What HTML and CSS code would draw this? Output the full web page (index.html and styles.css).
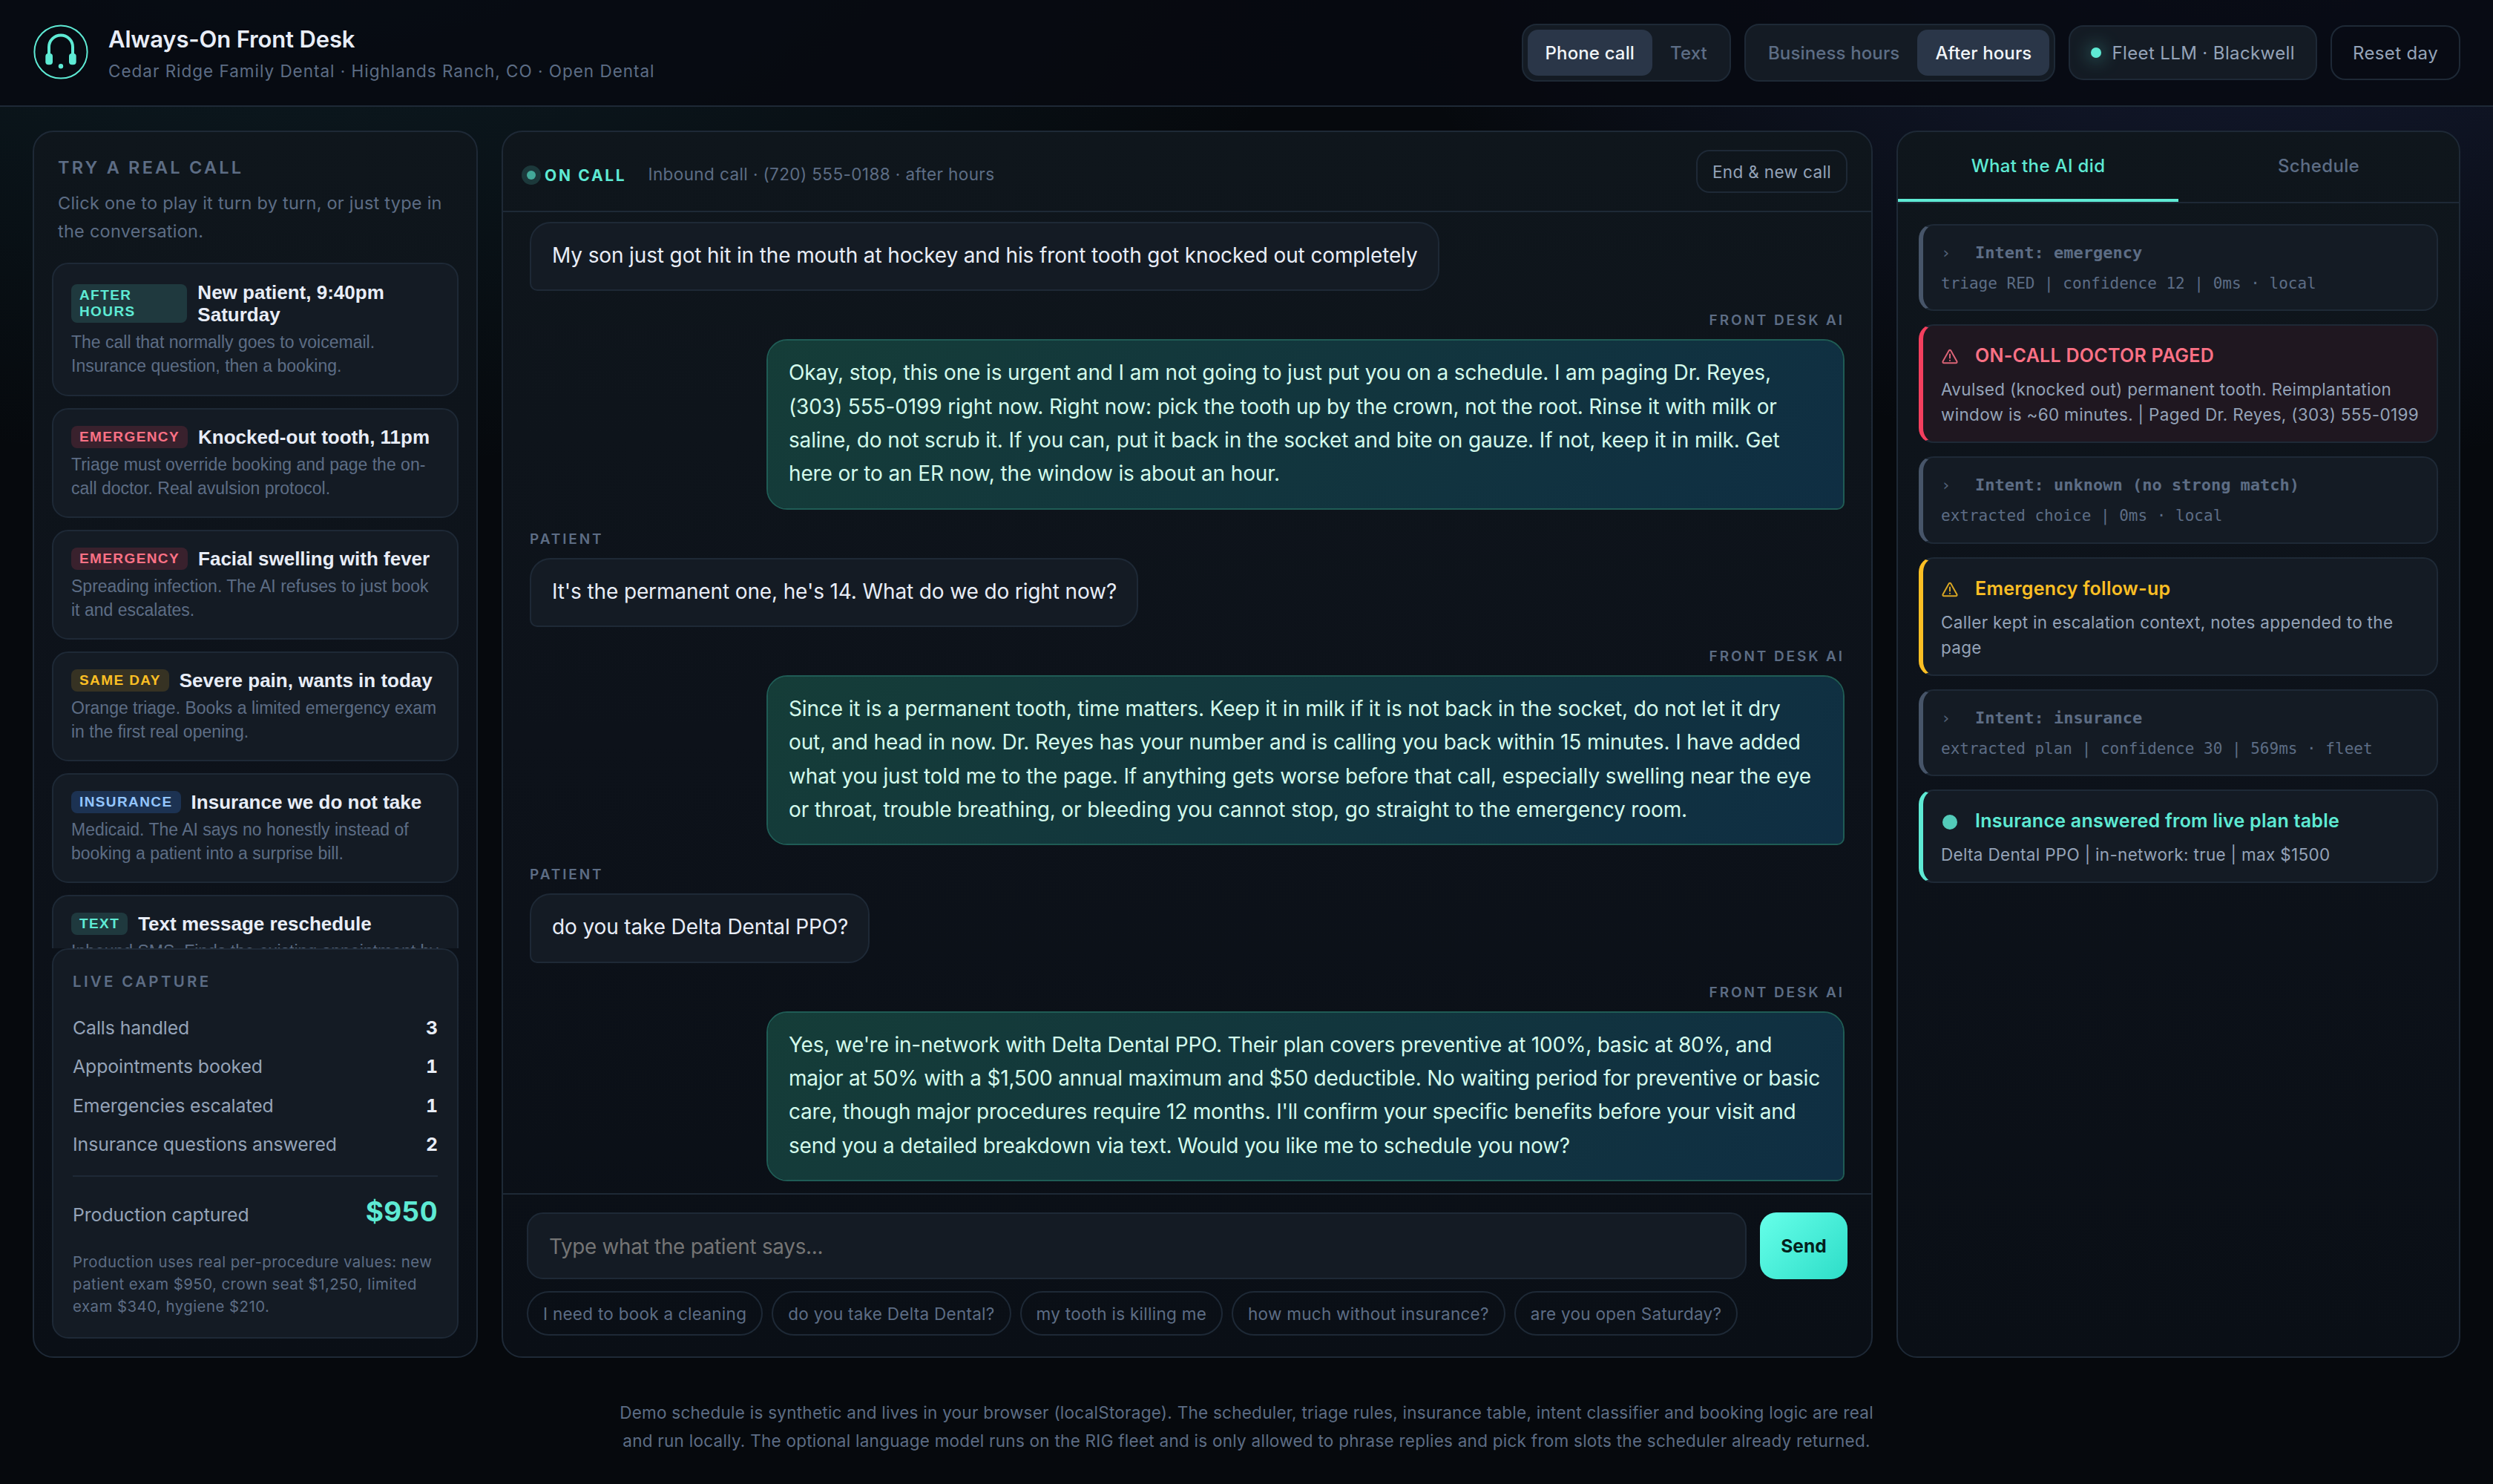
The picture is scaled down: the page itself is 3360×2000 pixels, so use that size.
FILE: index.html
```html
<!DOCTYPE html>
<html lang="en">
<head>
<meta charset="utf-8">
<meta name="viewport" content="width=device-width, initial-scale=1.0">
<title>Always-On Front Desk</title>
<link rel="stylesheet" href="styles.css">
</head>
<body>
<header class="topbar">
  <div class="brand">
    <svg class="logo" viewBox="0 0 76 76" fill="none">
      <circle cx="38" cy="38" r="35.6" stroke="#5eead4" stroke-width="2"/>
      <path d="M22 42V31.5a16 16 0 0 1 32 0V42" stroke="#5eead4" stroke-width="4"/>
      <rect x="17.3" y="40" width="9.7" height="15.3" rx="4" fill="#5eead4"/>
      <rect x="49" y="40" width="9.7" height="15.3" rx="4" fill="#5eead4"/>
      <circle cx="38" cy="57.3" r="3.2" fill="#5eead4"/>
    </svg>
    <div class="brand-text">
      <h1>Always-On Front Desk</h1>
      <p>Cedar Ridge Family Dental · Highlands Ranch, CO · Open Dental</p>
    </div>
  </div>
  <div class="controls">
    <div class="seg">
      <button class="on">Phone call</button>
      <button>Text</button>
    </div>
    <div class="seg">
      <button>Business hours</button>
      <button class="on">After hours</button>
    </div>
    <div class="pill"><span class="led"></span>Fleet LLM · Blackwell</div>
    <button class="ghost">Reset day</button>
  </div>
</header>

<main class="grid">
  <aside class="panel left">
    <div class="intro">
      <h2>TRY A REAL CALL</h2>
      <p>Click one to play it turn by turn, or just type in the conversation.</p>
    </div>
    <div class="scenarios">
      <button class="scenario">
        <span class="head"><span class="tag teal">AFTER HOURS</span><b>New patient, 9:40pm Saturday</b></span>
        <span class="desc">The call that normally goes to voicemail. Insurance question, then a booking.</span>
      </button>
      <button class="scenario">
        <span class="head"><span class="tag red">EMERGENCY</span><b>Knocked-out tooth, 11pm</b></span>
        <span class="desc">Triage must override booking and page the on-call doctor. Real avulsion protocol.</span>
      </button>
      <button class="scenario">
        <span class="head"><span class="tag red">EMERGENCY</span><b>Facial swelling with fever</b></span>
        <span class="desc">Spreading infection. The AI refuses to just book it and escalates.</span>
      </button>
      <button class="scenario">
        <span class="head"><span class="tag amber">SAME DAY</span><b>Severe pain, wants in today</b></span>
        <span class="desc">Orange triage. Books a limited emergency exam in the first real opening.</span>
      </button>
      <button class="scenario">
        <span class="head"><span class="tag blue">INSURANCE</span><b>Insurance we do not take</b></span>
        <span class="desc">Medicaid. The AI says no honestly instead of booking a patient into a surprise bill.</span>
      </button>
      <button class="scenario">
        <span class="head"><span class="tag teal">TEXT</span><b>Text message reschedule</b></span>
        <span class="desc">Inbound SMS. Finds the existing appointment by phone and moves it.</span>
      </button>
    </div>
    <div class="capture">
      <h3>LIVE CAPTURE</h3>
      <div class="stat"><span>Calls handled</span><b>3</b></div>
      <div class="stat"><span>Appointments booked</span><b>1</b></div>
      <div class="stat"><span>Emergencies escalated</span><b>1</b></div>
      <div class="stat"><span>Insurance questions answered</span><b>2</b></div>
      <div class="stat total"><span>Production captured</span><b>$950</b></div>
      <p>Production uses real per-procedure values: new patient exam $950, crown seat $1,250, limited exam $340, hygiene $210.</p>
    </div>
  </aside>

  <section class="panel center">
    <div class="call-bar">
      <span class="state"><i></i>ON CALL</span>
      <span class="meta">Inbound call · (720) 555-0188 · after hours</span>
      <button class="end">End &amp; new call</button>
    </div>
    <div class="messages">
      <div class="msg">
        <div class="bubble">My son just got hit in the mouth at hockey and his front tooth got knocked out completely</div>
      </div>
      <div class="msg ai">
        <span class="who">FRONT DESK AI</span>
        <div class="bubble">Okay, stop, this one is urgent and I am not going to just put you on a schedule. I am paging Dr. Reyes, (303) 555-0199 right now. Right now: pick the tooth up by the crown, not the root. Rinse it with milk or saline, do not scrub it. If you can, put it back in the socket and bite on gauze. If not, keep it in milk. Get here or to an ER now, the window is about an hour.</div>
      </div>
      <div class="msg">
        <span class="who">PATIENT</span>
        <div class="bubble">It's the permanent one, he's 14. What do we do right now?</div>
      </div>
      <div class="msg ai">
        <span class="who">FRONT DESK AI</span>
        <div class="bubble">Since it is a permanent tooth, time matters. Keep it in milk if it is not back in the socket, do not let it dry out, and head in now. Dr. Reyes has your number and is calling you back within 15 minutes. I have added what you just told me to the page. If anything gets worse before that call, especially swelling near the eye or throat, trouble breathing, or bleeding you cannot stop, go straight to the emergency room.</div>
      </div>
      <div class="msg">
        <span class="who">PATIENT</span>
        <div class="bubble">do you take Delta Dental PPO?</div>
      </div>
      <div class="msg ai">
        <span class="who">FRONT DESK AI</span>
        <div class="bubble">Yes, we're in-network with Delta Dental PPO. Their plan covers preventive at 100%, basic at 80%, and major at 50% with a $1,500 annual maximum and $50 deductible. No waiting period for preventive or basic care, though major procedures require 12 months. I'll confirm your specific benefits before your visit and send you a detailed breakdown via text. Would you like me to schedule you now?</div>
      </div>
    </div>
    <div class="composer">
      <div class="entry-row">
        <input type="text" placeholder="Type what the patient says...">
        <button class="send">Send</button>
      </div>
      <div class="chips">
        <button>I need to book a cleaning</button>
        <button>do you take Delta Dental?</button>
        <button>my tooth is killing me</button>
        <button>how much without insurance?</button>
        <button>are you open Saturday?</button>
      </div>
    </div>
  </section>

  <aside class="panel right">
    <div class="tabs">
      <button class="on">What the AI did</button>
      <button>Schedule</button>
    </div>
    <div class="log">
      <div class="event trace">
        <div class="event-head"><span class="icon">›</span>Intent: emergency</div>
        <div class="event-body">triage RED | confidence 12 | 0ms · local</div>
      </div>
      <div class="event danger">
        <div class="event-head"><span class="icon"><svg viewBox="0 0 24 22"><path d="M10.7 2.6 2.6 17c-.6 1.1.1 2.3 1.3 2.3h16.2c1.2 0 1.9-1.2 1.3-2.3L13.3 2.6c-.6-1-2-1-2.6 0zM12 7.6v5M12 15.7v.2"/></svg></span>ON-CALL DOCTOR PAGED</div>
        <div class="event-body">Avulsed (knocked out) permanent tooth. Reimplantation window is ~60 minutes. | Paged Dr. Reyes, (303) 555-0199</div>
      </div>
      <div class="event trace">
        <div class="event-head"><span class="icon">›</span>Intent: unknown (no strong match)</div>
        <div class="event-body">extracted choice | 0ms · local</div>
      </div>
      <div class="event warn">
        <div class="event-head"><span class="icon"><svg viewBox="0 0 24 22"><path d="M10.7 2.6 2.6 17c-.6 1.1.1 2.3 1.3 2.3h16.2c1.2 0 1.9-1.2 1.3-2.3L13.3 2.6c-.6-1-2-1-2.6 0zM12 7.6v5M12 15.7v.2"/></svg></span>Emergency follow-up</div>
        <div class="event-body">Caller kept in escalation context, notes appended to the page</div>
      </div>
      <div class="event trace">
        <div class="event-head"><span class="icon">›</span>Intent: insurance</div>
        <div class="event-body">extracted plan | confidence 30 | 569ms · fleet</div>
      </div>
      <div class="event ok">
        <div class="event-head"><span class="icon"><i class="dot"></i></span>Insurance answered from live plan table</div>
        <div class="event-body">Delta Dental PPO | in-network: true | max $1500</div>
      </div>
    </div>
  </aside>
</main>

<footer>
  <p>Demo schedule is synthetic and lives in your browser (localStorage). The scheduler, triage rules, insurance table, intent classifier and booking logic are real and run locally. The optional language model runs on the RIG fleet and is only allowed to phrase replies and pick from slots the scheduler already returned.</p>
</footer>
</body>
</html>
```
FILE: styles.css
```css
:root {
  --bg: #06090d;
  --card: #141b24;
  --line: #1e2936;
  --text: #e8edf7;
  --soft: #94a3b8;
  --muted: #5d6d85;
  --accent: #5eead4;
  --red: #fb7185;
  --amber: #fbbf24;
}
* { box-sizing: border-box; }
body {
  margin: 0;
  height: 2000px;
  overflow: hidden;
  color: var(--text);
  font-family: Inter, "Liberation Sans", sans-serif;
  background:
    radial-gradient(2400px 1400px at 12% -10%, rgba(70, 180, 210, .13), transparent 60%),
    radial-gradient(2000px 1400px at 90% -10%, rgba(90, 112, 228, .2), transparent 60%),
    var(--bg);
}
h1, h2, h3, p { margin: 0; }
button {
  margin: 0;
  border: 0;
  background: none;
  color: inherit;
  font-family: inherit;
}

/* top bar */
.topbar {
  display: flex;
  justify-content: space-between;
  align-items: flex-start;
  height: 144px;
  padding: 32px 44px 0;
  border-bottom: 2px solid var(--line);
  background: rgba(7, 10, 17, .84);
}
.brand { display: flex; gap: 26px; }
.logo { width: 76px; height: 76px; }
.brand-text h1 {
  font-size: 31px;
  line-height: 42px;
  font-weight: 620;
  letter-spacing: -.15px;
}
.brand-text p {
  margin-top: 5px;
  font-size: 22.5px;
  line-height: 34px;
  letter-spacing: .98px;
  color: var(--muted);
}
.controls { display: flex; align-items: center; gap: 18px; }
.seg {
  display: flex;
  padding: 6px;
  border: 2px solid var(--line);
  border-radius: 20px;
  background: var(--card);
}
.seg button {
  height: 62px;
  padding: 0 24px;
  border-radius: 14px;
  font-size: 24px;
  font-weight: 460;
  letter-spacing: .14px;
  color: var(--muted);
}
.seg .on { background: #2a3648; color: #f1f5f9; }
.pill, .ghost {
  display: flex;
  align-items: center;
  height: 74px;
  padding: 0 28px;
  border: 2px solid var(--line);
  border-radius: 20px;
  font-size: 24px;
  font-weight: 400;
  letter-spacing: .38px;
  color: var(--soft);
}
.pill { gap: 14px; background: var(--card); }
.led {
  width: 14px;
  height: 14px;
  border-radius: 50%;
  background: var(--accent);
  box-shadow: 0 0 24px rgba(94, 234, 212, .75);
}

/* layout */
.grid {
  display: grid;
  grid-template-columns: 600px 1fr 760px;
  gap: 32px;
  height: 1686px;
  padding: 32px 44px 0;
}
.panel {
  display: flex;
  flex-direction: column;
  min-width: 0;
  min-height: 0;
  overflow: hidden;
  border: 2px solid var(--line);
  border-radius: 28px;
  background: linear-gradient(180deg, #0f161c, #0d121a 50%, #0a0f16);
}

/* scenarios */
.left { padding: 24px; }
.intro { height: 152px; flex: none; padding: 6px 8px 0; }
.intro h2 {
  font-size: 23.5px;
  line-height: 36px;
  font-weight: 600;
  letter-spacing: 3.2px;
  color: var(--muted);
}
.intro p {
  margin-top: 11px;
  font-size: 23.5px;
  line-height: 38.2px;
  letter-spacing: .25px;
  color: var(--muted);
}
.scenarios {
  flex: 1;
  min-height: 0;
  overflow: hidden;
  display: flex;
  flex-direction: column;
  gap: 16px;
}
.scenario {
  display: block;
  flex: none;
  width: 100%;
  padding: 22px 24px;
  border: 2px solid var(--line);
  border-radius: 22px;
  background: var(--card);
  text-align: left;
  font-family: "Liberation Sans", Arial, sans-serif;
}
.scenario:first-child { height: 180px; }
.head { display: flex; align-items: center; gap: 14px; }
.head b { font-size: 26px; line-height: 30px; }
.tag {
  padding: 4px 11px;
  border-radius: 8px;
  font-size: 19px;
  line-height: 22px;
  font-weight: 700;
  letter-spacing: 1.4px;
}
.teal { color: var(--accent); background: rgba(94, 234, 212, .15); }
.red { color: var(--red); background: rgba(244, 63, 94, .17); }
.amber { color: var(--amber); background: rgba(251, 191, 36, .15); }
.blue { color: #93c5fd; background: rgba(59, 130, 246, .22); }
.desc {
  display: block;
  margin-top: 6px;
  font-size: 23px;
  line-height: 32px;
  color: var(--muted);
}

/* live capture */
.capture {
  flex: none;
  height: 526px;
  padding: 26px;
  border: 2px solid var(--line);
  border-radius: 22px;
  background: var(--card);
}
.capture h3 {
  margin-bottom: 20px;
  font-size: 20.5px;
  line-height: 33px;
  font-weight: 600;
  letter-spacing: 3.3px;
  color: var(--muted);
}
.stat {
  display: flex;
  justify-content: space-between;
  align-items: baseline;
  font-size: 24.8px;
  line-height: 52.3px;
  letter-spacing: -.08px;
  color: var(--soft);
}
.stat b {
  font-weight: 700;
  color: var(--text);
  font-variant-numeric: tabular-nums;
}
.total {
  margin-top: 16px;
  padding-top: 19px;
  border-top: 2px solid var(--line);
  line-height: 56px;
}
.total b { font-size: 37px; font-weight: 650; letter-spacing: .3px; color: var(--accent); }
.capture p {
  margin-top: 21px;
  font-size: 20.4px;
  line-height: 30px;
  letter-spacing: .46px;
  color: var(--muted);
}

/* conversation */
.call-bar {
  display: flex;
  align-items: center;
  flex: none;
  height: 108px;
  padding: 0 32px;
  border-bottom: 2px solid var(--line);
}
.state {
  display: flex;
  align-items: center;
  gap: 12px;
  padding-top: 10px;
  font-size: 21px;
  font-weight: 650;
  letter-spacing: 2.7px;
  color: var(--accent);
}
.state i {
  width: 12px;
  height: 12px;
  border-radius: 50%;
  background: #43a999;
  box-shadow: 0 0 0 7px rgba(94, 234, 212, .17);
}
.meta {
  margin-left: 29px;
  padding-top: 6px;
  font-size: 22.5px;
  letter-spacing: .4px;
  color: var(--muted);
}
.end {
  height: 58px;
  margin-left: auto;
  padding: 0 20px;
  border: 2px solid var(--line);
  border-radius: 18px;
  font-size: 22.5px;
  letter-spacing: .35px;
  color: var(--soft);
}
.messages {
  flex: 1;
  min-height: 0;
  overflow: hidden;
  display: flex;
  flex-direction: column;
  justify-content: flex-end;
  gap: 25px;
  padding: 0 36px 16px;
}
.msg {
  display: flex;
  flex-direction: column;
  align-items: flex-start;
  flex: none;
}
.who {
  margin-bottom: 10px;
  font-size: 19px;
  line-height: 30px;
  font-weight: 600;
  letter-spacing: 2.9px;
  color: var(--muted);
}
.bubble {
  max-width: 82%;
  padding: 21px 27px 23px 28px;
  border: 2px solid var(--line);
  border-radius: 28px 28px 28px 10px;
  background: var(--card);
  font-size: 28px;
  line-height: 45.35px;
  letter-spacing: -.13px;
}
.ai { align-items: flex-end; }
.ai .bubble {
  padding-right: 32px;
  border-color: #1f5c55;
  border-radius: 28px 28px 10px 28px;
  background: linear-gradient(135deg, #153d38, #0f2e43) padding-box;
  color: #d3faec;
}
.ai:last-child .bubble {
  padding-right: 24px;
  letter-spacing: -.22px;
}
.composer {
  flex: none;
  padding: 24px 32px 28px;
  border-top: 2px solid var(--line);
}
.entry-row { display: flex; gap: 18px; }
.entry-row input {
  flex: 1;
  height: 90px;
  padding: 1px 28px 0;
  border: 2px solid var(--line);
  border-radius: 22px;
  background: var(--card);
  color: var(--text);
  font-family: inherit;
  font-size: 27.8px;
  letter-spacing: -.25px;
}
.entry-row input::placeholder { color: #757575; }
.send {
  width: 118px;
  border-radius: 22px;
  background: linear-gradient(135deg, #66ffe9, #2dddc8);
  color: #04211c;
  font-size: 24.5px;
  font-weight: 650;
}
.chips { display: flex; gap: 12px; margin-top: 16px; }
.chips button {
  height: 60px;
  padding: 0 20px;
  border: 2px solid var(--line);
  border-radius: 30px;
  font-size: 22.5px;
  letter-spacing: .27px;
  color: var(--muted);
}

/* activity log */
.tabs {
  display: flex;
  flex: none;
  border-bottom: 2px solid var(--line);
}
.tabs button {
  flex: 1;
  height: 94px;
  border-bottom: 4px solid transparent;
  font-size: 24px;
  font-weight: 460;
  letter-spacing: .35px;
  color: var(--muted);
}
.tabs .on { color: var(--accent); border-color: var(--accent); }
.log {
  display: flex;
  flex-direction: column;
  gap: 18px;
  padding: 28px;
}
.event {
  padding: 20px 22px 19px 24px;
  border: 2px solid var(--line);
  border-left: 6px solid #475569;
  border-radius: 20px;
  background: var(--card);
}
.event-head {
  display: flex;
  margin-bottom: 9px;
  font-size: 25px;
  line-height: 40px;
  font-weight: 600;
  letter-spacing: .26px;
}
.icon {
  display: flex;
  align-items: center;
  width: 46px;
  flex: none;
  opacity: .85;
}
.icon svg {
  width: 24px;
  height: 22px;
  margin-top: 4px;
  fill: none;
  stroke: currentColor;
  stroke-width: 2;
  stroke-linecap: round;
  stroke-linejoin: round;
}
.icon .dot {
  width: 20px;
  height: 20px;
  margin: 4px 0 0 2px;
  border-radius: 50%;
  background: currentColor;
}
.event-body {
  font-size: 22.5px;
  line-height: 34px;
  letter-spacing: .31px;
  color: var(--soft);
}
.trace {
  font-family: "DejaVu Sans Mono", monospace;
  color: var(--muted);
}
.trace .event-head { font-size: 22px; line-height: 33px; font-weight: 700; letter-spacing: 0; }
.trace .event-body { font-size: 21px; line-height: 32.3px; letter-spacing: 0; color: var(--muted); }
.trace .icon { font-size: 22px; font-weight: 400; }
.danger { border-left-color: #f43f5e; background: #1f1720; }
.danger .event-head { color: var(--red); }
.warn { border-left-color: var(--amber); }
.warn .event-head { color: var(--amber); }
.ok { border-left-color: var(--accent); }
.ok .event-head { color: var(--accent); }

footer p {
  width: 1720px;
  margin: 55px auto 0;
  text-align: center;
  font-size: 22.5px;
  line-height: 38.2px;
  letter-spacing: .255px;
  color: var(--muted);
}
```
